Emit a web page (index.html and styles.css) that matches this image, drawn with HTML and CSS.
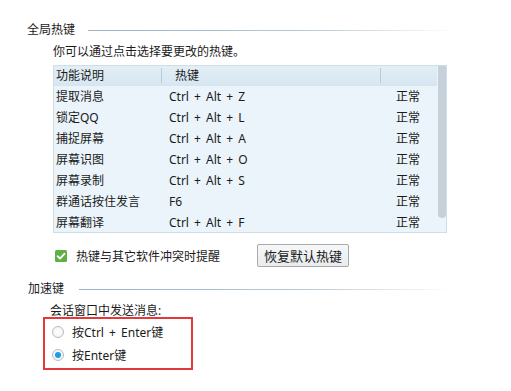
FILE: index.html
```html
<!DOCTYPE html>
<html lang="zh-CN">
<head>
<meta charset="utf-8">
<title>热键设置</title>
<link rel="stylesheet" href="styles.css">
</head>
<body>
<div class="page">
  <div class="group-title"><span>全局热键</span><i class="rule rule-a"></i></div>
  <div class="hk-body">
    <p class="desc">你可以通过点击选择要更改的热键。</p>
    <div class="table">
      <div class="list">
        <div class="thead">
          <div class="c1">功能说明</div>
          <div class="c2 th2">热键</div>
          <div class="c3"></div>
        </div>
        <div class="row"><div class="c1">提取消息</div><div class="c2">Ctrl + Alt + Z</div><div class="c3">正常</div></div>
        <div class="row"><div class="c1">锁定QQ</div><div class="c2">Ctrl + Alt + L</div><div class="c3">正常</div></div>
        <div class="row"><div class="c1">捕捉屏幕</div><div class="c2">Ctrl + Alt + A</div><div class="c3">正常</div></div>
        <div class="row"><div class="c1">屏幕识图</div><div class="c2">Ctrl + Alt + O</div><div class="c3">正常</div></div>
        <div class="row"><div class="c1">屏幕录制</div><div class="c2">Ctrl + Alt + S</div><div class="c3">正常</div></div>
        <div class="row"><div class="c1">群通话按住发言</div><div class="c2">F6</div><div class="c3">正常</div></div>
        <div class="row"><div class="c1">屏幕翻译</div><div class="c2">Ctrl + Alt + F</div><div class="c3">正常</div></div>
      </div>
      <div class="sb"><div class="thumb"></div></div>
    </div>
    <div class="opts">
      <span class="check"><svg width="12" height="12" viewBox="0 0 12 12"><rect x="0" y="0" width="12" height="12" rx="1.5" fill="#5fae46"/><path d="M2.6 6.2 L5 8.6 L9.6 3.6" fill="none" stroke="#fff" stroke-width="1.8" stroke-linecap="round" stroke-linejoin="round"/></svg></span>
      <span class="opt-label">热键与其它软件冲突时提醒</span>
      <button class="btn">恢复默认热键</button>
    </div>
  </div>
  <div class="group-title g2"><span>加速键</span><i class="rule rule-b"></i></div>
  <div class="acc-body">
    <p class="desc2">会话窗口中发送消息:</p>
    <div class="redbox">
      <div class="radio-row"><span class="radio"></span><span>按Ctrl + Enter键</span></div>
      <div class="radio-row"><span class="radio on"></span><span>按Enter键</span></div>
    </div>
  </div>
</div>
</body>
</html>
```
FILE: styles.css
```css
* { box-sizing: border-box; }
html, body { margin: 0; padding: 0; background: #fff; }
body {
  font-family: "Noto Sans", "Noto Sans CJK SC", sans-serif;
  font-size: 12px;
  word-spacing: 2px;
  color: #1b1b1b;
}
.page { padding-top: 22px; }
.group-title {
  display: flex;
  align-items: center;
  height: 16px;
  line-height: 16px;
  padding-left: 27px;
}
.rule {
  display: block;
  height: 1px;
  background: linear-gradient(to right, #9db1c0 0%, #b9c8d3 60%, rgba(255,255,255,0) 100%);
}
.rule-a { margin-left: 13px; width: 370px; }
.g2 { margin-top: 14px; padding-left: 28px; }
.rule-b { margin-left: 15px; width: 375px; }
.hk-body { padding-left: 53px; }
.desc { margin: 6px 0 5px; line-height: 16px; }
.table {
  display: flex;
  width: 394px;
  height: 168px;
  border: 1px solid #cfdde7;
  background: #eaf4fa;
}
.list { flex: 1; }
.thead {
  display: flex;
  height: 20px;
  line-height: 20px;
  background: linear-gradient(#e3eef6, #d6e6f1);
}
.thead .c1, .thead .c2 { border-right: 1px solid #b7cbd8; }
.row { display: flex; height: 21px; line-height: 21px; }
.c1 { width: 108px; padding-left: 2px; }
.c2 { width: 219px; padding-left: 7px; }
.th2 { padding-left: 13px; }
.c3 { flex: 1; padding-left: 15px; }
.thead > div { height: 15px; line-height: 15px; margin-top: 2px; }
.sb { width: 9px; }
.thumb {
  height: 152px;
  background: #c6d0d8;
  border-radius: 1px 1px 4px 4px;
  margin-left: 1px;
  width: 8px;
}
.opts {
  display: flex;
  align-items: center;
  height: 23px;
  margin-top: 11px;
  padding-left: 2px;
}
.check { display: flex; width: 12px; height: 12px; }
.opt-label { margin-left: 9px; }
.btn {
  margin-left: 37px;
  width: 92px;
  height: 23px;
  padding: 0;
  font: inherit;
  font-size: 13px;
  color: #1b1b1b;
  border: 1px solid #a9a9a9;
  border-radius: 2px;
  background: linear-gradient(#f6f7f8, #e9ecee);
}
.acc-body { padding-left: 43px; }
.desc2 { margin: 7px 0 0 7px; line-height: 13px; }
.redbox {
  width: 150px;
  height: 53px;
  border: 2px solid #e5383b;
  padding: 1px 0 0 7px;
}
.radio-row { display: flex; align-items: center; height: 23px; }
.radio {
  width: 12px;
  height: 12px;
  border-radius: 50%;
  border: 1px solid #b8bcc0;
  background: radial-gradient(circle, #ffffff 0%, #eef0f2 100%);
  margin-right: 8px;
  position: relative;
}
.radio.on::after {
  content: "";
  position: absolute;
  left: 2px;
  top: 2px;
  width: 6px;
  height: 6px;
  border-radius: 50%;
  background: #1d9be6;
}
```
